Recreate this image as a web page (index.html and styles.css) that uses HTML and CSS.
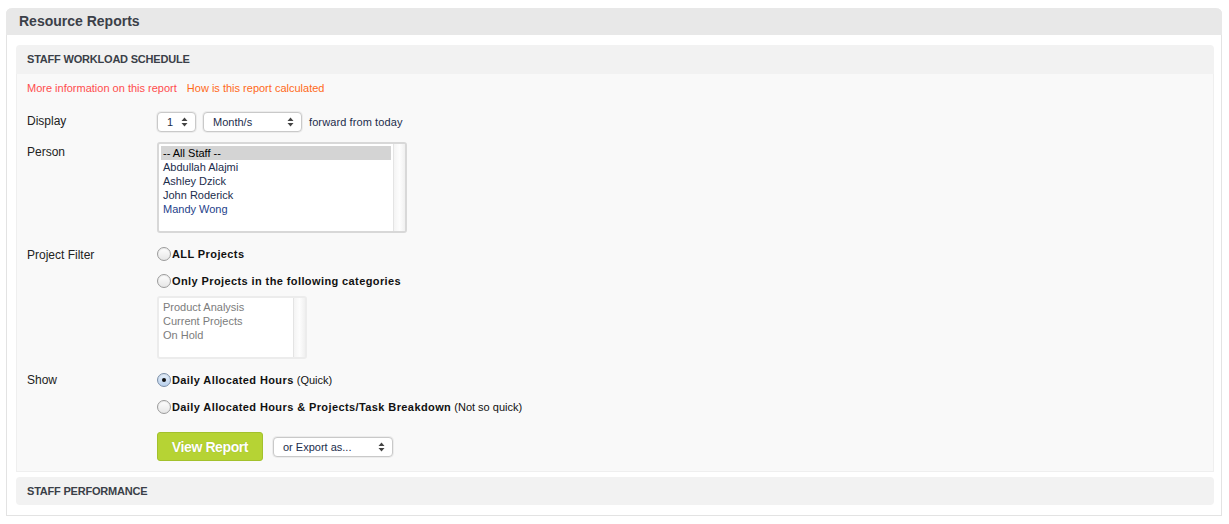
FILE: index.html
```html
<!DOCTYPE html>
<html lang="en">
<head>
    <meta charset="UTF-8">
    <meta name="viewport" content="width=device-width, initial-scale=1.0">
    <title>Resource Reports</title>
    <link rel="stylesheet" href="styles.css">
</head>
<body>

    <div class="panel">
        <div class="panel-head">Resource Reports</div>

        <div class="panel-body">

            <!-- Staff workload schedule -->
            <div class="report">
                <div class="report-head">STAFF WORKLOAD SCHEDULE</div>
                <div class="report-body">
                    <div class="links">
                        <a class="link-info" href="#">More information on this report</a>
                        <a class="link-calc" href="#">How is this report calculated</a>
                    </div>

                    <div class="form">
                        <div class="label label-display">Display</div>
                        <div class="field field-display">
                            <div class="select select-num">
                                <span>1</span>
                                <svg width="7" height="10" viewBox="0 0 7 10"><path d="M3.5 0.5L6.5 4H0.5Z M3.5 9.5L6.5 6H0.5Z" fill="#444"/></svg>
                            </div>
                            <div class="select select-unit">
                                <span>Month/s</span>
                                <svg width="7" height="10" viewBox="0 0 7 10"><path d="M3.5 0.5L6.5 4H0.5Z M3.5 9.5L6.5 6H0.5Z" fill="#444"/></svg>
                            </div>
                            <span class="hint">forward from today</span>
                        </div>

                        <div class="label label-person">Person</div>
                        <div class="field field-person">
                            <div class="listbox listbox-staff">
                                <ul>
                                    <li class="selected">-- All Staff --</li>
                                    <li>Abdullah Alajmi</li>
                                    <li>Ashley Dzick</li>
                                    <li>John Roderick</li>
                                    <li class="blue">Mandy Wong</li>
                                </ul>
                                <div class="scroll-track"></div>
                            </div>
                        </div>

                        <div class="label label-filter">Project Filter</div>
                        <div class="field field-filter">
                            <label class="option"><span class="radio"></span><b>ALL Projects</b></label>
                            <label class="option"><span class="radio"></span><b>Only Projects in the following categories</b></label>
                            <div class="listbox listbox-cat">
                                <ul>
                                    <li>Product Analysis</li>
                                    <li>Current Projects</li>
                                    <li>On Hold</li>
                                </ul>
                                <div class="scroll-track"></div>
                            </div>
                        </div>

                        <div class="label label-show">Show</div>
                        <div class="field field-show">
                            <label class="option"><span class="radio checked"></span><b>Daily Allocated Hours</b>&nbsp;(Quick)</label>
                            <label class="option"><span class="radio"></span><b>Daily Allocated Hours &amp; Projects/Task Breakdown</b>&nbsp;(Not so quick)</label>
                            <div class="actions">
                                <button class="btn-view">View Report</button>
                                <div class="select select-export">
                                    <span>or Export as...</span>
                                    <svg width="7" height="10" viewBox="0 0 7 10"><path d="M3.5 0.5L6.5 4H0.5Z M3.5 9.5L6.5 6H0.5Z" fill="#444"/></svg>
                                </div>
                            </div>
                        </div>
                    </div>
                </div>
            </div>

            <!-- Staff performance -->
            <div class="report report-collapsed">
                <div class="report-head">STAFF PERFORMANCE</div>
            </div>

        </div>
    </div>

</body>
</html>
```

FILE: styles.css
```css
/* General Styling */
body {
    background-color: #fff;
    font-family: "Liberation Sans", Arial, sans-serif;
    font-size: 11px;
    color: #222;
    margin: 0;
    padding: 0;
}

/* Outer panel */
.panel {
    margin: 8px 7px 0 6px;
    border: 1px solid #e3e3e3;
    border-top: none;
    border-radius: 6px 6px 0 0;
}

.panel-head {
    height: 27px;
    line-height: 27px;
    margin: 0 -1px;
    padding-left: 13px;
    background-color: #e8e8e8;
    border-radius: 6px 6px 0 0;
    font-size: 14px;
    font-weight: bold;
    color: #3b4048;
}

.panel-body {
    padding: 10px 7px 10px 9px;
}

/* Report blocks */
.report {
    border-radius: 4px 4px 0 0;
}

.report-head {
    height: 29px;
    line-height: 28px;
    padding-left: 11px;
    background-color: #f2f2f2;
    border-radius: 4px 4px 0 0;
    font-size: 11px;
    font-weight: bold;
    color: #3a3f48;
    letter-spacing: -0.2px;
}

.report-body {
    background-color: #f9f9f9;
    border: 1px solid #efefef;
    border-top: none;
    padding: 7px 10px 10px 10px;
}

.report-collapsed {
    margin-top: 5px;
    border-radius: 4px;
}

.report-collapsed .report-head {
    height: 28px;
    border-radius: 4px;
}

/* Links */
.links {
    line-height: 14px;
}

.links a {
    text-decoration: none;
    margin-right: 7px;
}

.link-info {
    color: #ff4d4d;
}

.link-calc {
    color: #ff6a1a;
}

/* Form grid */
.form {
    display: grid;
    grid-template-columns: 130px 1fr;
    margin-top: 17px;
}

.label {
    line-height: 14px;
    color: #222;
    font-size: 12px;
}

.label-display { padding-top: 2px; }
.label-person { padding-top: 3px; margin-top: 10px; }
.label-filter { padding-top: 2px; margin-top: 13px; }
.label-show { padding-top: 1px; margin-top: 13px; }

.field-person { margin-top: 10px; }
.field-filter { margin-top: 13px; }
.field-show { margin-top: 13px; }

.field-display {
    display: flex;
    align-items: center;
    gap: 7px;
    height: 20px;
}

.hint {
    color: #1c2d4c;
    letter-spacing: 0.1px;
}

/* Fake select boxes */
.select {
    display: flex;
    align-items: center;
    justify-content: space-between;
    box-sizing: border-box;
    height: 20px;
    padding: 0 7px 0 9px;
    background-color: #fff;
    border: 1px solid #c9c9c9;
    border-radius: 4px;
    box-shadow: 0 0 0 1px #ececec;
    color: #1c2d4c;
}

.select-num { width: 39px; }
.select-unit { width: 99px; padding-left: 9px; }
.select-export { width: 120px; padding-left: 9px; }

/* List boxes */
.listbox {
    display: flex;
    box-sizing: border-box;
    background-color: #fff;
    border: 2px solid #d8d8d8;
    border-radius: 3px;
}

.listbox ul {
    flex: 1;
    list-style: none;
    margin: 0;
    padding: 2px 2px 0 2px;
    line-height: 14px;
}

.listbox li {
    padding-left: 2px;
}

.listbox-staff {
    width: 250px;
    height: 91px;
}

.listbox-staff li {
    color: #1c2d4c;
}

.listbox-staff li.selected {
    background-color: #d4d4d4;
    color: #000;
}

.listbox-staff li.blue {
    color: #25418a;
}

.listbox-cat {
    width: 150px;
    height: 63px;
    margin-top: 7px;
    border-color: #ececec;
}

.listbox-cat li {
    color: #7c7c7c;
}

.scroll-track {
    width: 11px;
    border-left: 1px solid #e4e4e4;
    background: linear-gradient(to right, #f4f4f4, #fdfdfd 50%, #f0f0f0);
}

/* Radio options */
.option {
    display: flex;
    align-items: center;
    height: 16px;
    color: #111;
}

.option + .option {
    margin-top: 11px;
}

.option b {
    font-weight: bold;
    letter-spacing: 0.4px;
}

.radio {
    box-sizing: border-box;
    width: 14px;
    height: 14px;
    margin-right: 1px;
    border: 1px solid #9b9b9b;
    border-radius: 50%;
    background: linear-gradient(#fefefe, #e6e6e6);
    box-shadow: inset 0 1px 1px rgba(0, 0, 0, 0.08);
    position: relative;
}

.radio.checked {
    border-color: #7a8ea8;
    background: linear-gradient(#e6f0fb, #b9d0ec);
}

.radio.checked::after {
    content: "";
    position: absolute;
    top: 4px;
    left: 4px;
    width: 4px;
    height: 4px;
    border-radius: 50%;
    background-color: #111;
}

/* Actions */
.actions {
    display: flex;
    align-items: center;
    gap: 10px;
    margin-top: 17px;
}

.btn-view {
    width: 106px;
    height: 29px;
    border: 1px solid #a3c12c;
    border-radius: 3px;
    background-color: #b6d334;
    color: #fff;
    font-family: "Liberation Sans", Arial, sans-serif;
    font-size: 14px;
    font-weight: bold;
    letter-spacing: -0.4px;
    text-shadow: 0 0 1px rgba(90, 110, 10, 0.35);
    cursor: pointer;
}
```
